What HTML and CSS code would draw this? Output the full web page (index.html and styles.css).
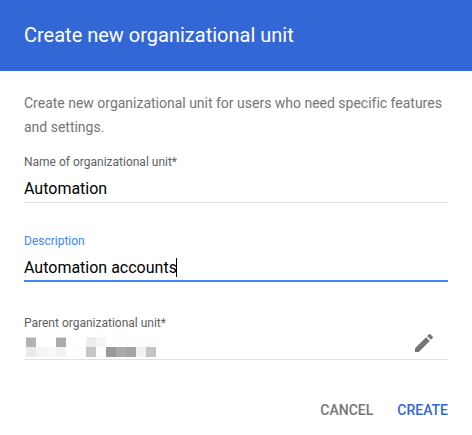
FILE: index.html
```html
<!DOCTYPE html>
<html lang="en">
<head>
<meta charset="utf-8">
<title>Create new organizational unit</title>
<link rel="stylesheet" href="styles.css">
</head>
<body>
<main class="dialog">
<header class="dialog-header"><h1>Create new organizational unit</h1></header>
<section class="dialog-body">
<p class="intro">Create new organizational unit for users who need specific features and settings.</p>
<div class="field name"><span class="label">Name of organizational unit*</span><span class="value">Automation</span></div>
<div class="field description"><span class="label">Description</span><span class="value">Automation accounts<i class="caret"></i></span></div>
<div class="field parent"><span class="label">Parent organizational unit*</span>
<div class="parent-row">
<svg class="redacted" width="132" height="20" viewBox="0 0 132 20" shape-rendering="crispEdges">
<path fill="#b2b2b2" d="M0 0h10v10H0z"/><path fill="#acacac" d="M30 0h10v10H30z"/>
<path fill="#ededed" d="M60 0h10v10H60z"/><path fill="#f5f5f5" d="M70 0h10v10H70z"/><path fill="#fdfdfd" d="M90 0h40v10H90z"/>
<path fill="#d8d8d8" d="M0 0h10v1H0zM30 0h10v1H30z"/>
<path fill="#eaeaea" d="M0 10h10v10H0z"/><path fill="#f4f4f4" d="M10 10h10v10H10z"/><path fill="#f8f8f8" d="M20 10h10v10H20z"/><path fill="#f2f2f2" d="M30 10h10v10H30z"/>
<path fill="#fcfcfc" d="M50 10h10v10H50zM70 10h10v10H70z"/><path fill="#c5c5c5" d="M60 10h10v10H60zM120 10h10v10H120z"/>
<path fill="#999" d="M80 10h10v10H80z"/><path fill="#ababab" d="M90 10h10v10H90z"/><path fill="#a5a5a5" d="M100 10h10v10H100z"/><path fill="#f1f1f1" d="M110 10h10v10H110z"/>
</svg>
<svg class="pencil" width="24" height="24" viewBox="0 0 24 24"><path d="M3 17.25V21h3.75L17.81 9.94l-3.75-3.75L3 17.25zM20.71 7.04a1 1 0 0 0 0-1.41l-2.34-2.34a1 1 0 0 0-1.41 0l-1.83 1.83 3.75 3.75 1.83-1.83z"/></svg>
</div></div>
</section>
<footer class="actions"><button>CANCEL</button><button class="create">CREATE</button></footer>
</main>
</body>
</html>
```
FILE: styles.css
```css
* { box-sizing: border-box; }
body { margin: 0; background: #fff; font-family: Roboto, sans-serif; }
.dialog { width: 472px; height: 435px; overflow: hidden; }
.dialog-header { height: 71px; padding: 0 24px 1px; background: #3367d6; color: #fff; display: flex; align-items: center; }
h1 { margin: 0; font-size: 20px; line-height: 24px; font-weight: 400; }
.dialog-body { padding: 20px 24px 0; }
.intro { margin: 0; font-size: 14px; line-height: 24px; letter-spacing: -0.008px; color: #757575; }
.field { display: flex; flex-direction: column; border-bottom: 1px solid #e0e0e0; }
.label { font-size: 12px; line-height: 16px; color: #616161; }
.value { display: flex; align-items: center; font-size: 16px; line-height: 24px; color: #000; }
.name { margin-top: 15px; height: 49px; }
.name .value { margin-top: 7px; }
.description { margin-top: 30px; height: 49px; border-bottom: 2px solid #4285f4; }
.description .label { color: #4285f4; }
.description .value { margin-top: 7px; }
.caret { width: 1px; height: 19px; margin: 0 0 1px -1px; background: #000; }
.parent { margin-top: 33px; height: 45px; }
.parent-row { display: flex; justify-content: space-between; padding: 0 12px 0 2px; }
.redacted { margin-top: 6px; }
.pencil { fill: #757575; }
.actions { display: flex; justify-content: flex-end; gap: 24px; padding: 38px 24px 0; }
button { padding: 0; border: 0; background: none; font: 500 14px/24px Roboto, sans-serif; color: #757575; }
.create { color: #3367d6; }
```
